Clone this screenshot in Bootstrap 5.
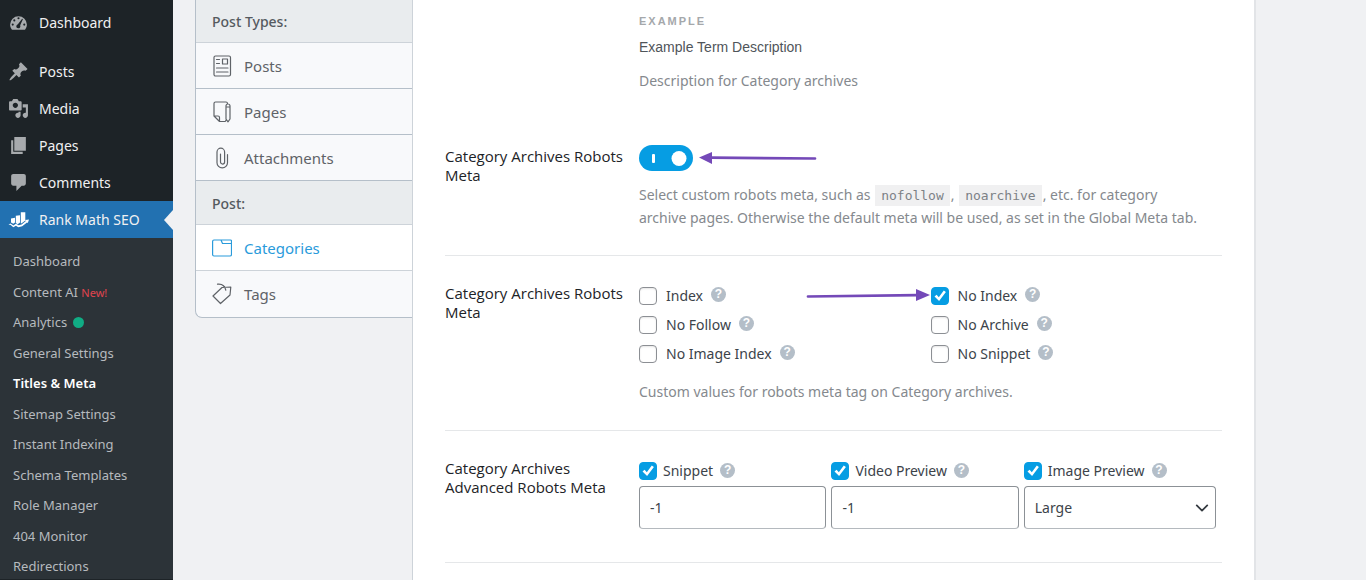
<!DOCTYPE html>
<html lang="en">
<head>
<meta charset="utf-8">
<meta name="viewport" content="width=device-width, initial-scale=1">
<title>Titles &amp; Meta</title>
<link href="https://cdn.jsdelivr.net/npm/bootstrap@5.3.0/dist/css/bootstrap.min.css" rel="stylesheet">
<style>
  :root { --rm-blue: #069de3; --rm-line: #b5bfc9; --rm-page: #f0f1f3; }
  body { background: var(--rm-page); font-family: "Noto Sans", "Open Sans", sans-serif; font-size: 14px; line-height: 20px; color: #3c434a; }

  /* Admin menu */
  .wp-menu { width: 173px; background: #1d2327; }
  .wp-menu a { color: #f0f0f1; text-decoration: none; }
  .menu-top a { height: 37px; gap: 10px; padding-left: 8px; }
  .menu-top svg { width: 21px; height: 21px; fill: #a7aaad; }
  .menu-top .is-current { background: #2271b1; position: relative; }
  .menu-top .is-current svg { fill: #fff; }
  .is-current::after { content: ""; position: absolute; right: 0; top: 9px; border: 10px solid transparent; border-left-width: 0; border-right: 9px solid var(--rm-page); }
  .menu-sep { height: 12px; }
  .menu-sub { background: #2c3338; padding: 13px 0 3px 13px; font-size: 13px; }
  .menu-sub li + li { margin-top: 10px; }
  .menu-sub li:nth-child(even) { margin-top: 11px; }
  .menu-sub a { color: #b6babe; }
  .menu-sub .active { color: #fff; font-weight: 600; }
  .new-tag { color: #e0444f; font-size: 11px; line-height: 11px; }
  .live-dot { width: 11px; height: 11px; margin-left: 6px; background: #10ac84; }

  /* Section tabs */
  .rm-tabs { width: 218px; margin-left: 22px; border: 1px solid var(--rm-line); border-top: 0; border-right: 0; border-radius: 0 0 0 7px; overflow: hidden; background: #f8f9fb; font-size: 15px; }
  .rm-tabs > * { padding-left: 16px; border-bottom: 1px solid var(--rm-line); border-right: 1px solid #cdd3d9; }
  .rm-tabs > :last-child { border-bottom: 0; }
  .rm-tabs .tab-head { height: 44px; padding-top: 2px; background: #e9ecee; color: #555a5f; font-size: 14px; font-weight: 500; border-color: #cdd3d9; }
  .rm-tabs a { height: 46px; gap: 12px; color: #5f6368; text-decoration: none; }
  .rm-tabs .head-first { height: 43px; }
  .rm-tabs .active { background: #fff; color: #2a9bdb; border-right-color: #fff; border-bottom-color: #cdd3d9; }
  .rm-tabs svg { width: 20px; height: 22px; fill: none; stroke: currentColor; stroke-width: 1.2; stroke-linejoin: round; stroke-linecap: round; }

  /* Settings panel */
  .rm-panel { background: #fff; border-left: 1px solid #cdd3d9; border-right: 2px solid #e2e4e7; margin: 0 110px 0 -1px; padding: 11px 32px 0; min-height: 100vh; }
  .opt { padding: 25px 0 26px; border-bottom: 1px solid #e5e7e9; }
  .opt-name { width: 194px; padding: 3px 12px 0 0; font-family: "Open Sans", "Noto Sans", sans-serif; font-size: 15px; line-height: 19px; font-weight: 500; color: #1d2327; }
  .opt-help { margin-top: 12px; color: #85898e; line-height: 23px; }
  .opt-help code { background: #f0f0f1; color: #7c8186; font-family: "DejaVu Sans Mono", monospace; font-size: 13px; line-height: 13px; padding: 3px 6px; margin: 0 1px; }
  .opt-first { padding: 0 0 53px; border: 0; }
  .opt-toggle { padding-top: 0; }
  .opt-toggle .opt-name { padding-top: 2px; }
  .opt-checks { padding-bottom: 27px; }
  .opt-advanced { padding-bottom: 33px; }
  .eg-title { font: bold 11px/20px "Liberation Sans", Arial, sans-serif; letter-spacing: 2px; color: #a5a8ab; }
  .eg-term { font: 14px/20px "Liberation Sans", Arial, sans-serif; color: #50555a; margin-top: 6px; }

  .form-check-input.rm-switch { width: 54px; height: 26px; margin: 0; border: 0; border-radius: 13px; }
  .form-check-input.rm-switch:checked { background: var(--rm-blue) url("data:image/svg+xml,%3csvg xmlns='http://www.w3.org/2000/svg' viewBox='0 0 54 26'%3e%3crect x='13' y='9' width='3' height='9' rx='1' fill='white'/%3e%3ccircle cx='40' cy='13.5' r='7.5' fill='white'/%3e%3c/svg%3e") center / 100% 100% no-repeat; }
  .form-check-input.rm-box { width: 18px; height: 18px; margin: 0; border: 1px solid #8c8f94; border-radius: 4px; flex: none; box-shadow: inset 0 1px 2px rgba(0,0,0,.1); }
  .form-check-input.rm-box:checked { border-color: var(--rm-blue); box-shadow: none; background: var(--rm-blue) url("data:image/svg+xml,%3csvg xmlns='http://www.w3.org/2000/svg' viewBox='0 0 16 16'%3e%3cpath d='M2.5 8.500 4.600 6.800 6.800 9.300 11.800 2.500 13.900 4 7.100 13z' fill='white'/%3e%3c/svg%3e") center / 100% 100% no-repeat; }
  .check-row { height: 29px; gap: 9px; }
  .adv-cell .check-row { height: 30px; gap: 6px; }
  .tip { width: 15px; height: 15px; background: #b4bec8; color: #fff; font: bold 12px/15px "Liberation Sans", Arial, sans-serif; }
  .check-row .tip { margin: -2px 0 0 -1px; }
  .adv-cell .check-row .tip { margin-left: 1px; }
  .adv-grid { grid-template-columns: repeat(3, 33%); }
  .adv-cell:not(:last-child) { padding-right: 5px; }
  .adv-cell .rm-field { height: 43px; padding: 0 10px; font-size: 14px; color: #3c434a; border: 1px solid #8c9196; border-bottom-color: #b4b9be; border-radius: 4px; }
  .adv-cell select.rm-field { background-size: 14px 14px; background-position: right 6px center; }

  /* Callout arrows */
  .callout { fill: #7449b8; stroke: #7449b8; }
  .callout-right { position: absolute; right: 100%; top: 8px; }
</style>
</head>
<body>
<div class="d-flex align-items-start min-vh-100">
  <nav class="wp-menu flex-shrink-0 align-self-stretch" aria-label="Admin menu">
    <div class="menu-top pt-1">
      <a href="#" class="d-flex align-items-center">
        <svg viewBox="0 0 20 20"><path fill-rule="evenodd" d="M3.800 17h12.400c1.100-1.400 1.800-3.100 1.800-5a8 8 0 1 0-16 0c0 1.900.6 3.600 1.800 5zM10 5a1 1 0 1 1 0 2 1 1 0 0 1 0-2zM6 7a1 1 0 1 1 0 2 1 1 0 0 1 0-2zM4.500 11a1 1 0 1 1 0 2 1 1 0 0 1 0-2zM15.500 11a1 1 0 1 1 0 2 1 1 0 0 1 0-2zM13.500 6.500l.7.5-2.600 5.500c.6 1.700-.4 3-1.800 3-1.500 0-2.300-1.500-1.700-2.700.3-.6.8-1 1.300-1.100z"/></svg>
        <span>Dashboard</span></a>
      <div class="menu-sep"></div>
      <a href="#" class="d-flex align-items-center">
        <svg viewBox="0 0 20 20"><path d="M10.440 3.020l1.820-1.820 6.360 6.350-1.830 1.820c-1.050-.68-2.480-.57-3.410.36l-.75.75c-.92.93-1.040 2.350-.35 3.410l-1.830 1.820-2.410-2.410-2.800 2.790c-.42.42-3.380 2.710-3.800 2.290s1.860-3.390 2.280-3.810l2.790-2.790L4.100 9.360l1.830-1.820c1.050.69 2.480.57 3.400-.36l.75-.75c.93-.92 1.050-2.350.36-3.410z"/></svg>
        <span>Posts</span></a>
      <a href="#" class="d-flex align-items-center">
        <svg viewBox="0 0 20 20"><path d="M13 11V4c0-.55-.45-1-1-1h-1.670L9 1H5L3.670 3H2c-.55 0-1 .45-1 1v7c0 .55.45 1 1 1h10c.55 0 1-.45 1-1zM7 4.500c1.380 0 2.500 1.120 2.500 2.500S8.380 9.500 7 9.500 4.500 8.380 4.500 7 5.620 4.500 7 4.500zM14 6h5v10.500c0 1.380-1.120 2.500-2.500 2.500S14 17.880 14 16.500s1.120-2.500 2.500-2.500c.17 0 .34.02.5.05V9h-3V6zm-4 8.050V13h2v3.500c0 1.380-1.120 2.500-2.500 2.500S7 17.880 7 16.500 8.120 14 9.500 14c.17 0 .34.02.5.05z"/></svg>
        <span>Media</span></a>
      <a href="#" class="d-flex align-items-center">
        <svg viewBox="0 0 20 20"><path d="M6 15V2h11v13H6zm-1 1h9v2H3V5h2v11z"/></svg>
        <span>Pages</span></a>
      <a href="#" class="d-flex align-items-center">
        <svg viewBox="0 0 20 20"><path d="M5 2h10c1.100 0 2 .9 2 2v7c0 1.100-.9 2-2 2h-2l-5 5v-5H5c-1.100 0-2-.9-2-2V4c0-1.100.9-2 2-2z"/></svg>
        <span>Comments</span></a>
      <a href="#" class="d-flex align-items-center is-current" aria-current="true">
        <svg viewBox="0 0 21 21"><path d="M3 9.500 7 8.800V13.600l-1.700 1.200L3 13.500zM7.800 6.800 12 6.200v7.300l-2.300 1.700-1.900-1.100zM12.800 3.200H17.300v8.300l-4 3.100-.5-.3zM.5 15.400l2-.9 2.900 1.900 2.500-1.700 2.700 1.600 3-.8 4.300-3.600-.8-.8 3.900-.5-1.200 3.500-.8-.7-4.800 3.900-3.900.9-2.400-1.400-2.600 1.500-2.600-2.200z"/></svg>
        <span>Rank Math SEO</span></a>
    </div>
    <ul class="menu-sub list-unstyled mb-0">
      <li><a href="#">Dashboard</a></li>
      <li><a href="#">Content AI <span class="new-tag">New!</span></a></li>
      <li><a href="#" class="d-flex align-items-center">Analytics<span class="live-dot rounded-circle"></span></a></li>
      <li><a href="#">General Settings</a></li>
      <li><a href="#" class="active">Titles &amp; Meta</a></li>
      <li><a href="#">Sitemap Settings</a></li>
      <li><a href="#">Instant Indexing</a></li>
      <li><a href="#">Schema Templates</a></li>
      <li><a href="#">Role Manager</a></li>
      <li><a href="#">404 Monitor</a></li>
      <li><a href="#">Redirections</a></li>
    </ul>
  </nav>

  <nav class="rm-tabs flex-shrink-0 d-flex flex-column" aria-label="Title settings">
    <div class="tab-head head-first d-flex align-items-center">Post Types:</div>
    <a href="#" class="d-flex align-items-center">
      <svg viewBox="0 0 20 22"><rect x="2" y="1" width="16.500" height="20" rx="1.500"/><path d="M4.500 4.500h3M4.500 8.500h3M10.500 4h5v5h-5zM4.500 13h11.500M4.500 17h11.500"/></svg>
      <span>Posts</span></a>
    <a href="#" class="d-flex align-items-center">
      <svg viewBox="0 0 20 22"><path d="M15.500 2.300A1.500 1.500 0 0 0 14 1H3.500A1.500 1.500 0 0 0 2 2.500V15l5.500 5.500h5A1.500 1.500 0 0 0 14 19M2 15h4a1.500 1.500 0 0 1 1.500 1.500v4M14 6v12l2 2.800 2-2.800V5a2 2 0 0 0-4 0v1h4"/></svg>
      <span>Pages</span></a>
    <a href="#" class="d-flex align-items-center">
      <svg viewBox="0 0 20 22"><path d="M15.500 7.500v8.200a5.200 5.200 0 0 1-10.500 0V5a3.800 3.800 0 0 1 7.600 0v10a2 2 0 0 1-4.100 0V7"/></svg>
      <span>Attachments</span></a>
    <div class="tab-head d-flex align-items-center">Post:</div>
    <a href="#" class="d-flex align-items-center active" aria-current="page">
      <svg viewBox="0 0 20 22"><path d="M2 3h7l1.500 3.500h9V17.500a1.500 1.500 0 0 1-1.500 1.500H2A1.500 1.500 0 0 1 .6 17.500V4.500A1.500 1.500 0 0 1 2 3zM9 3h9.500a1 1 0 0 1 1 1v2.500"/></svg>
      <span>Categories</span></a>
    <a href="#" class="d-flex align-items-center">
      <svg viewBox="0 0 20 22"><path d="M10 4.500 18.800 4 18 12 8.500 20.500 1 13zM5.500 1.200c4-.4 7.500 1.600 8.300 6"/></svg>
      <span>Tags</span></a>
  </nav>

  <main class="rm-panel flex-grow-1">
    <section class="opt opt-first d-flex">
      <div class="opt-name flex-shrink-0"></div>
      <div class="flex-grow-1">
        <div class="eg-title">EXAMPLE</div>
        <div class="eg-term">Example Term Description</div>
        <div class="opt-help">Description for Category archives</div>
      </div>
    </section>

    <section class="opt opt-toggle d-flex">
      <label class="opt-name flex-shrink-0" for="robots-toggle">Category Archives Robots Meta</label>
      <div class="flex-grow-1">
        <div class="d-flex align-items-center gap-1">
          <input class="form-check-input rm-switch" type="checkbox" role="switch" id="robots-toggle" checked>
          <svg class="callout" width="120" height="14" viewBox="0 0 120 14" aria-hidden="true"><path d="M2 6.500 15 1v12z" stroke="none"/><path d="M14 6.700 118 7.500" stroke-width="2.700" stroke-linecap="round"/></svg>
        </div>
        <div class="opt-help">Select custom robots meta, such as <code>nofollow</code>, <code>noarchive</code>, etc. for category<br>archive pages. Otherwise the default meta will be used, as set in the Global Meta tab.</div>
      </div>
    </section>

    <section class="opt opt-checks d-flex">
      <div class="opt-name flex-shrink-0" id="robots-name">Category Archives Robots Meta</div>
      <div class="flex-grow-1" role="group" aria-labelledby="robots-name">
        <div class="row g-0">
          <div class="col-6">
            <div class="check-row d-flex align-items-center"><input class="form-check-input rm-box" type="checkbox" id="c-index"><label for="c-index">Index</label><span class="tip rounded-circle text-center">?</span></div>
            <div class="check-row d-flex align-items-center"><input class="form-check-input rm-box" type="checkbox" id="c-nofollow"><label for="c-nofollow">No Follow</label><span class="tip rounded-circle text-center">?</span></div>
            <div class="check-row d-flex align-items-center"><input class="form-check-input rm-box" type="checkbox" id="c-noimage"><label for="c-noimage">No Image Index</label><span class="tip rounded-circle text-center">?</span></div>
          </div>
          <div class="col-6">
            <div class="check-row d-flex align-items-center position-relative"><input class="form-check-input rm-box" type="checkbox" id="c-noindex" checked><label for="c-noindex">No Index</label><span class="tip rounded-circle text-center">?</span>
              <svg class="callout callout-right" width="125" height="14" viewBox="0 0 125 14" aria-hidden="true"><path d="M124 6 110 0v12z" stroke="none"/><path d="M2 7.500 111 6.200" stroke-width="2.700" stroke-linecap="round"/></svg></div>
            <div class="check-row d-flex align-items-center"><input class="form-check-input rm-box" type="checkbox" id="c-noarchive"><label for="c-noarchive">No Archive</label><span class="tip rounded-circle text-center">?</span></div>
            <div class="check-row d-flex align-items-center"><input class="form-check-input rm-box" type="checkbox" id="c-nosnippet"><label for="c-nosnippet">No Snippet</label><span class="tip rounded-circle text-center">?</span></div>
          </div>
        </div>
        <div class="opt-help">Custom values for robots meta tag on Category archives.</div>
      </div>
    </section>

    <section class="opt opt-advanced d-flex">
      <div class="opt-name flex-shrink-0" id="adv-name">Category Archives Advanced Robots Meta</div>
      <div class="adv-grid d-grid flex-grow-1" role="group" aria-labelledby="adv-name">
        <div class="adv-cell">
          <div class="check-row d-flex align-items-center"><input class="form-check-input rm-box" type="checkbox" id="a-snippet" checked><label for="a-snippet">Snippet</label><span class="tip rounded-circle text-center">?</span></div>
          <input class="form-control rm-field" type="text" value="-1" aria-label="Snippet length">
        </div>
        <div class="adv-cell">
          <div class="check-row d-flex align-items-center"><input class="form-check-input rm-box" type="checkbox" id="a-video" checked><label for="a-video">Video Preview</label><span class="tip rounded-circle text-center">?</span></div>
          <input class="form-control rm-field" type="text" value="-1" aria-label="Video preview length">
        </div>
        <div class="adv-cell">
          <div class="check-row d-flex align-items-center"><input class="form-check-input rm-box" type="checkbox" id="a-image" checked><label for="a-image">Image Preview</label><span class="tip rounded-circle text-center">?</span></div>
          <select class="form-select rm-field" aria-label="Image preview size"><option>Large</option></select>
        </div>
      </div>
    </section>
  </main>
</div>
<script src="https://cdn.jsdelivr.net/npm/bootstrap@5.3.0/dist/js/bootstrap.bundle.min.js"></script>
</body>
</html>
